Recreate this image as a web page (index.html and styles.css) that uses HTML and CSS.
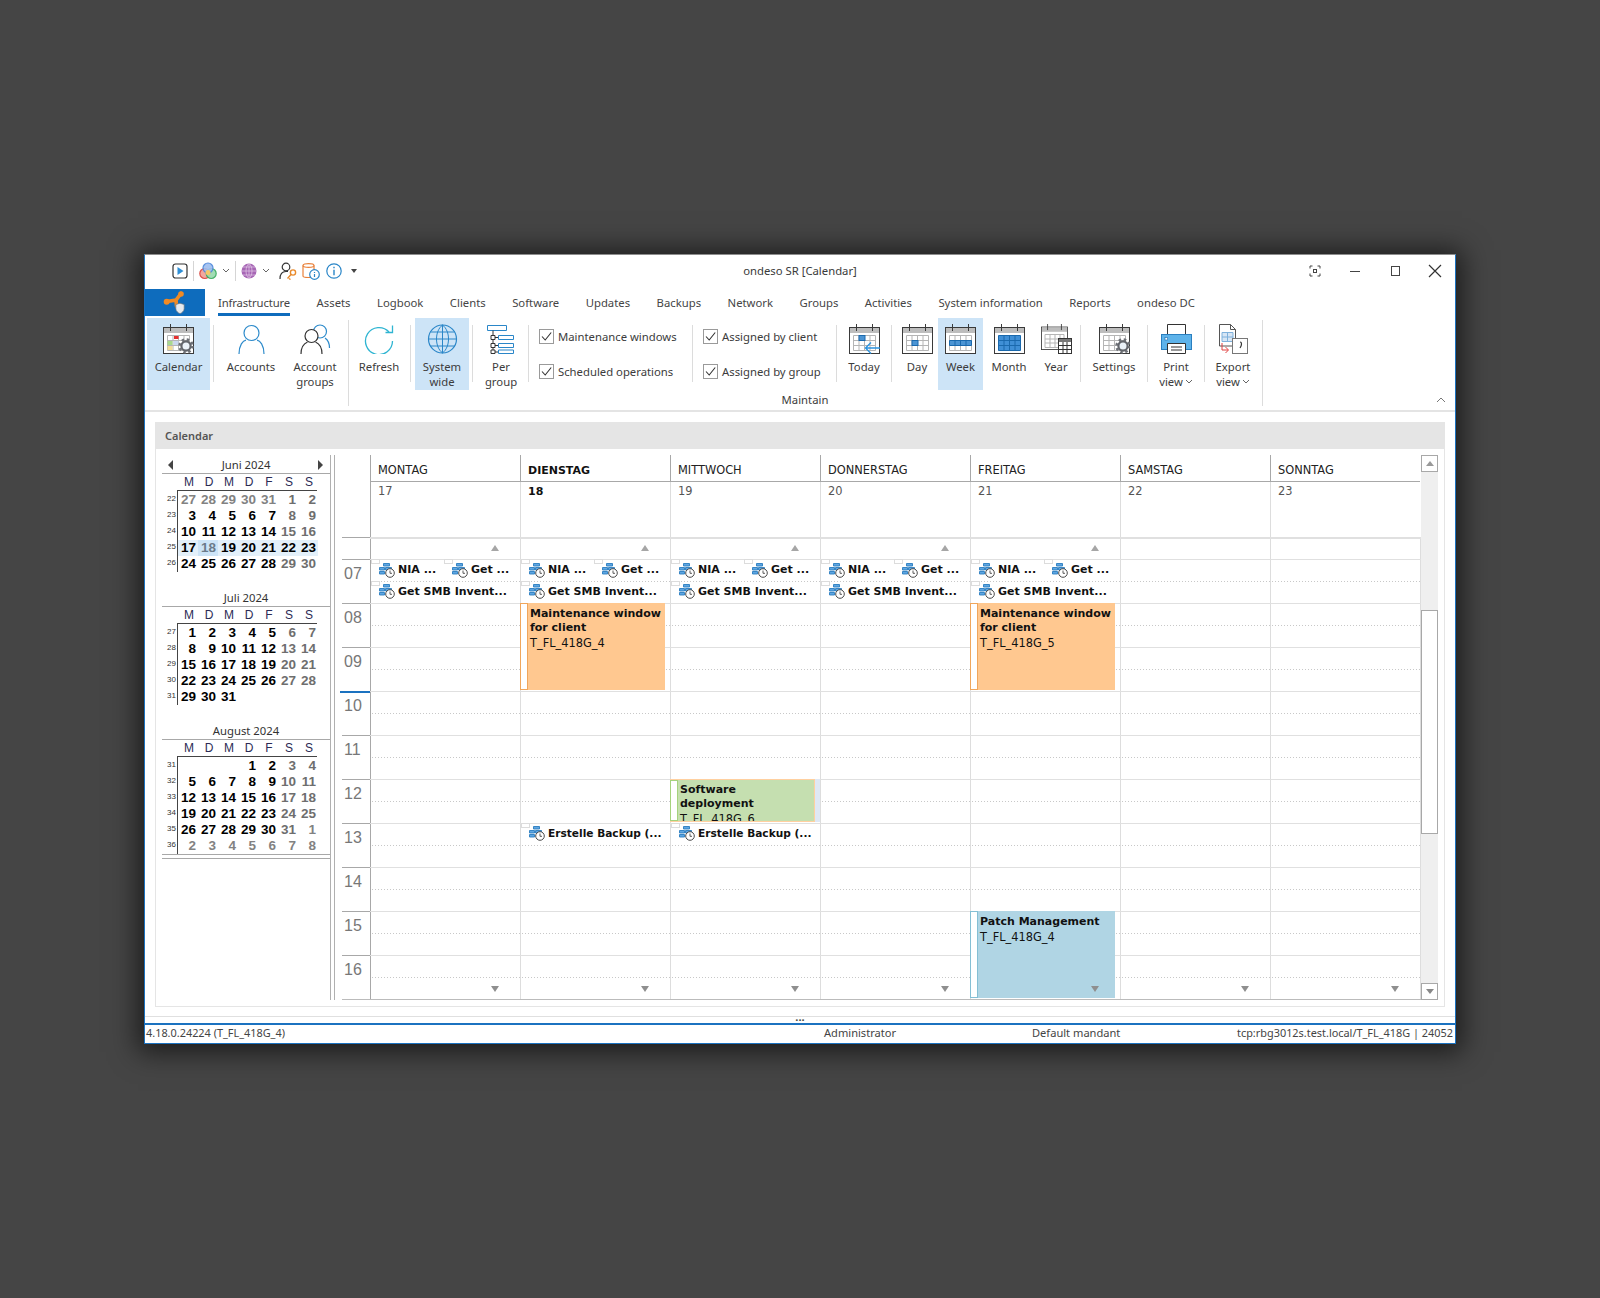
FILE: index.html
```html
<!DOCTYPE html>
<html lang="en">
<head>
<meta charset="utf-8">
<title>ondeso SR [Calendar]</title>
<link rel="stylesheet" href="styles.css">
</head>
<body>
<svg class="defs" width="0" height="0" aria-hidden="true">
  <symbol id="cal" viewBox="0 0 31 30">
    <rect x="0.5" y="3.5" width="30" height="26" fill="#fff" stroke="#3a3a3a"/>
    <rect x="1" y="4" width="29" height="5" fill="#bdbdbd"/>
    <path d="M7.5 0v7M23.5 0v7" stroke="#3a3a3a" fill="none"/>
  </symbol>
  <symbol id="grid" viewBox="0 0 31 30">
    <path d="M4.5 11.500h22v15h-22zM4.500 16.500h22M4.500 21.500h22M10 11.500v15M15.500 11.500v15M21 11.500v15" fill="none" stroke="#b5b5b5"/>
  </symbol>
  <symbol id="gear" viewBox="0 0 16 16">
    <circle cx="8" cy="8" r="6.500" fill="none" stroke="#6f7278" stroke-width="2.500" stroke-dasharray="2.500 2.600"/>
    <circle cx="8" cy="8" r="4.600" fill="#eaf1f8" stroke="#62656b" stroke-width="2.200"/>
  </symbol>
  <symbol id="job" viewBox="0 0 16 16">
    <path d="M4.500 1.500h6v2.500h-6zM0.500 5.500h5v2.500h-5zM6.500 5.500h6v2.500h-6zM0.500 9.500h5v2.500h-5z" fill="#5ea6e2" stroke="#2a7dc0" stroke-width=".9"/>
    <circle cx="11" cy="11" r="4.300" fill="#fff" stroke="#4a4a4a"/>
    <path d="M11 8.500V11.300H13" fill="none" stroke="#4a4a4a" stroke-width=".9"/>
  </symbol>
  <symbol id="chev" viewBox="0 0 8 5">
    <path d="M1 1l3 3 3-3" fill="none" stroke="#666"/>
  </symbol>
</svg>

<div class="window">
  <header class="titlebar">
    <div class="qa">
      <svg class="i16" viewBox="0 0 16 16"><rect x="1" y="1" width="14" height="14" rx="2.500" fill="#fff" stroke="#333" stroke-width="1.200"/><path d="M5.500 4v8l6-4z" fill="#2f8fd6"/></svg>
      <span class="qsep"></span>
      <svg class="i18" viewBox="0 0 18 18"><circle cx="5.800" cy="11.500" r="5" fill="#f2a79e" stroke="#dc4f48" stroke-width="1.200"/><circle cx="12.200" cy="11.500" r="5" fill="#9edcb2" stroke="#3fae62" stroke-width="1.200" opacity=".95"/><circle cx="9" cy="6" r="5" fill="#9dbdef" stroke="#4a85da" stroke-width="1.200" opacity=".9"/><circle cx="9" cy="10.500" r="2.500" fill="#f4c768"/></svg>
      <svg class="chev" viewBox="0 0 8 5"><use href="#chev"/></svg>
      <span class="qsep"></span>
      <svg class="i16" viewBox="0 0 16 16"><circle cx="8" cy="8" r="7.500" fill="#a766b5"/><path d="M0.500 8h15M8 .5v15M2 4h12M2 12h12M8 .5c-4 3-4 12 0 15M8 .5c4 3 4 12 0 15" fill="none" stroke="#e4cce8" stroke-width=".7"/></svg>
      <svg class="chev" viewBox="0 0 8 5"><use href="#chev"/></svg>
      <svg class="i18 ml4" viewBox="0 0 18 18"><circle cx="7" cy="5" r="3.800" fill="#fff" stroke="#333" stroke-width="1.200"/><path d="M1 17c0-5 2-7.500 6-7.500h2" fill="none" stroke="#333" stroke-width="1.200"/><circle cx="14" cy="10.500" r="2.600" fill="none" stroke="#e98a2b" stroke-width="1.400"/><path d="M12 12.500L8.500 16.500M10 16.500l1.500 1" fill="none" stroke="#e98a2b" stroke-width="1.400"/></svg>
      <svg class="i18" viewBox="0 0 18 18"><path d="M1 3.500C1 1 12 1 12 3.500V14c0 2-11 2-11 0z" fill="#fff" stroke="#e9813a" stroke-width="1.200"/><path d="M1 3.500c0 2.500 11 2.500 11 0" fill="none" stroke="#e9813a" stroke-width="1.200"/><circle cx="12.500" cy="12.500" r="4.800" fill="#fff" stroke="#2a86c8" stroke-width="1.200"/><path d="M12.500 10v.9M12.500 12v3" stroke="#2a86c8" stroke-width="1.200"/></svg>
      <svg class="i16 ml1" viewBox="0 0 16 16"><circle cx="8" cy="8" r="7.200" fill="#fff" stroke="#2a86c8" stroke-width="1.200"/><path d="M8 3.800v1.400M8 6.800v5.400" stroke="#2a86c8" stroke-width="1.400"/></svg>
      <span class="qarrow"></span>
    </div>
    <div class="title">ondeso SR [Calendar]</div>
    <div class="winctl">
      <span class="wbtn"><svg class="i12" viewBox="0 0 12 12"><path d="M1 3.500V1h2.500M8.500 1H11v2.500M11 8.500V11H8.500M3.500 11H1V8.500" fill="none" stroke="#444"/><rect x="4.500" y="4.500" width="3" height="3" fill="none" stroke="#444"/></svg></span>
      <span class="wbtn"><svg class="i12" viewBox="0 0 12 12"><path d="M1 6.500h10" stroke="#444"/></svg></span>
      <span class="wbtn"><svg class="i12" viewBox="0 0 12 12"><rect x="2.500" y="1.500" width="8" height="9" fill="none" stroke="#444"/></svg></span>
      <span class="wbtn"><svg class="i12b" viewBox="0 0 14 14"><path d="M1 1l12 12M13 1L1 13" stroke="#333" stroke-width="1.200"/></svg></span>
    </div>
  </header>

  <nav class="tabs">
    <div class="logo">
      <svg class="logo-i" viewBox="0 0 24 24"><path d="M4 10.500L13 9l5-6.500M13 9l0.500 6" fill="none" stroke="#f08a24" stroke-width="3.600" stroke-linecap="round"/><circle cx="3.700" cy="10.700" r="3" fill="#f08a24"/><circle cx="18" cy="3" r="2.800" fill="#f08a24"/><path d="M12.800 13.500l4.200-1.300 4.200 1.300v4.200c0 2.500-2.200 4-4.200 5-2-1-4.200-2.500-4.200-5z" fill="#e6eaee" stroke="#5d6e7c" stroke-width=".7"/></svg>
    </div>
    <span class="tab active">Infrastructure</span>
    <span class="tab">Assets</span>
    <span class="tab">Logbook</span>
    <span class="tab">Clients</span>
    <span class="tab">Software</span>
    <span class="tab">Updates</span>
    <span class="tab">Backups</span>
    <span class="tab">Network</span>
    <span class="tab">Groups</span>
    <span class="tab">Activities</span>
    <span class="tab">System information</span>
    <span class="tab">Reports</span>
    <span class="tab">ondeso DC</span>
  </nav>

  <section class="ribbon">
    <div class="btn w63 on">
      <svg class="ico" viewBox="0 0 31 30">
        <use href="#cal" width="31" height="30"/><use href="#grid" width="31" height="30"/>
        <rect x="11" y="12" width="4.500" height="3" fill="#e53030"/><rect x="4.500" y="17" width="5" height="4" fill="#a8d88e"/><rect x="10.500" y="17" width="5" height="4" fill="#c9d6ef"/><rect x="4.500" y="22" width="5" height="4" fill="#f3dc96"/>
        <use href="#gear" x="15" y="14" width="16" height="16"/>
      </svg>
      <span class="lbl">Calendar</span>
    </div>
    <span class="sep ml3"></span>
    <div class="btn w68 ml3">
      <svg class="ico" viewBox="0 0 31 30"><circle cx="15.500" cy="9" r="7.500" fill="none" stroke="#2e8bcb" stroke-width="1.200"/><path d="M3 30c0-9 4-13.500 7-13.800M28 30c0-9-4-13.500-7-13.800" fill="none" stroke="#2e8bcb" stroke-width="1.200"/></svg>
      <span class="lbl">Accounts</span>
    </div>
    <div class="btn w60">
      <svg class="ico" viewBox="0 0 31 30"><circle cx="20" cy="7.500" r="6.500" fill="#fff" stroke="#2e8bcb" stroke-width="1.200"/><path d="M25 14c3 2 4.500 5 4.500 10" fill="none" stroke="#2e8bcb" stroke-width="1.200"/><circle cx="11.500" cy="12" r="6.500" fill="#fff" stroke="#333" stroke-width="1.200"/><path d="M1 30c0-7 3-10.500 6.500-12M22 30c0-7-3-10.500-6.500-12" fill="none" stroke="#333" stroke-width="1.200"/></svg>
      <span class="lbl">Account<br>groups</span>
    </div>
    <span class="gsep ml3"></span>

    <div class="group">
      <div class="group-row">
        <div class="btn w60">
          <svg class="ico" viewBox="0 0 31 30"><path d="M25 8a13.500 13.500 0 1 0 3.500 9" fill="none" stroke="#2fb5d2" stroke-width="1.300"/><path d="M28.500 1.500V8.500H21.500" fill="none" stroke="#2fb5d2" stroke-width="1.300"/></svg>
          <span class="lbl">Refresh</span>
        </div>
        <span class="sep ml1"></span>
        <div class="btn w54 ml4 on">
          <svg class="ico" viewBox="0 0 31 30"><circle cx="15.500" cy="15" r="14" fill="none" stroke="#2a86c8" stroke-width="1.200"/><path d="M1.500 15h28M15.500 1v28M3.500 8h24M3.500 22h24M15.500 1c-8 6-8 22 0 28M15.500 1c8 6 8 22 0 28" fill="none" stroke="#2a86c8"/></svg>
          <span class="lbl">System<br>wide</span>
        </div>
        <span class="sep ml3"></span>
        <div class="btn w55 pl1">
          <svg class="ico" viewBox="0 0 31 30"><path d="M1.500 1.500h19v5h-19zM12.500 11.500h15v4h-15zM12.500 19.500h15v4h-15zM12.500 26h15v3.500h-15z" fill="#fff" stroke="#2a86c8"/><path d="M7 6.500V28M7 13.500h5M7 21.500h5M7 28h5" fill="none" stroke="#333"/><path d="M5 11.500h4v4H5zM5 19.500h4v4H5zM5 26h4v3.500H5z" fill="#fff" stroke="#333"/></svg>
          <span class="lbl">Per<br>group</span>
        </div>
        <span class="sep"></span>
        <div class="checks ml10 w153">
          <label class="chk"><span class="box"><svg class="tick" viewBox="0 0 11 11"><path d="M1 5.500l3.200 3.500 6-7.500" fill="none" stroke="#333" stroke-width="1.100"/></svg></span><span>Maintenance windows</span></label>
          <label class="chk"><span class="box"><svg class="tick" viewBox="0 0 11 11"><path d="M1 5.500l3.200 3.500 6-7.500" fill="none" stroke="#333" stroke-width="1.100"/></svg></span><span>Scheduled operations</span></label>
        </div>
        <span class="sep"></span>
        <div class="checks ml10 w133">
          <label class="chk"><span class="box"><svg class="tick" viewBox="0 0 11 11"><path d="M1 5.500l3.200 3.500 6-7.500" fill="none" stroke="#333" stroke-width="1.100"/></svg></span><span>Assigned by client</span></label>
          <label class="chk"><span class="box"><svg class="tick" viewBox="0 0 11 11"><path d="M1 5.500l3.200 3.500 6-7.500" fill="none" stroke="#333" stroke-width="1.100"/></svg></span><span>Assigned by group</span></label>
        </div>
        <span class="sep"></span>
        <div class="btn w54">
          <svg class="ico" viewBox="0 0 31 30"><use href="#cal" width="31" height="30"/><use href="#grid" width="31" height="30"/><rect x="10" y="11.500" width="6" height="5" fill="#4b94d3" stroke="#1a69ad"/><path d="M31 24H17M22 18.500L16.500 24l5.500 5.500" fill="none" stroke="#2a93e0" stroke-width="1.300"/></svg>
          <span class="lbl">Today</span>
        </div>
        <span class="sep"></span>
        <div class="btn w46 pl4">
          <svg class="ico" viewBox="0 0 31 30"><use href="#cal" width="31" height="30"/><use href="#grid" width="31" height="30"/><rect x="10" y="16.500" width="6" height="5" fill="#4b94d3" stroke="#1a69ad"/></svg>
          <span class="lbl">Day</span>
        </div>
        <div class="btn w45 on">
          <svg class="ico" viewBox="0 0 31 30"><use href="#cal" width="31" height="30"/><use href="#grid" width="31" height="30"/><path d="M4.500 16.500h22v5h-22zM10 16.500v5M15.500 16.500v5M21 16.500v5" fill="#4b94d3" stroke="#1a69ad"/></svg>
          <span class="lbl">Week</span>
        </div>
        <div class="btn w52">
          <svg class="ico" viewBox="0 0 31 30"><use href="#cal" width="31" height="30"/><path d="M4.500 11.500h22v15h-22z" fill="#3f8fd6" stroke="#1a69ad"/><path d="M4.500 16.500h22M4.500 21.500h22M10 11.500v15M15.500 11.500v15M21 11.500v15" fill="none" stroke="#1a69ad"/></svg>
          <span class="lbl">Month</span>
        </div>
        <div class="btn w42">
          <svg class="ico" viewBox="0 0 31 30"><use href="#cal" width="27" height="26"/><path d="M4 10.500h19v13H4zM4 15h19M4 19h19M9 10.500v13M14 10.500v13M19 10.500v13" fill="none" stroke="#b5b5b5"/><rect x="17.500" y="14.500" width="13" height="15" fill="#fff" stroke="#333"/><rect x="18" y="15" width="12" height="3" fill="#777"/><path d="M17.500 21.500h13M17.500 25.500h13M22 18v11.500M26 18v11.500" fill="none" stroke="#333"/></svg>
          <span class="lbl">Year</span>
        </div>
        <span class="sep ml3"></span>
        <div class="btn w66">
          <svg class="ico" viewBox="0 0 31 30"><use href="#cal" width="31" height="30"/><use href="#grid" width="31" height="30"/><use href="#gear" x="16" y="14" width="16" height="16"/></svg>
          <span class="lbl">Settings</span>
        </div>
        <span class="sep"></span>
        <div class="btn w56">
          <svg class="ico" viewBox="0 0 31 30"><path d="M6.500 .5h18v11h-18z" fill="#fff" stroke="#333"/><rect x=".5" y="10.500" width="30" height="15" fill="#5eb3ea" stroke="#2a7fc0"/><rect x="4" y="13.500" width="2.500" height="2.500" fill="#fff" stroke="#1a69ad" stroke-width=".6"/><path d="M6.500 19.500h18v10h-18z" fill="#fff" stroke="#333"/><path d="M10 23h11M10 26h11" stroke="#333"/></svg>
          <span class="lbl">Print<br>view<svg class="mchev" viewBox="0 0 8 5"><use href="#chev"/></svg></span>
        </div>
        <span class="sep"></span>
        <div class="btn w56">
          <svg class="ico" viewBox="0 0 31 30"><path d="M1.500 .5h11l5 5V22h-16z" fill="#fff" stroke="#555"/><path d="M12.500 .5v5h5" fill="none" stroke="#555"/><path d="M4 8.500h11v9H4zM4 13h11M9.500 8.500v9" fill="#d7e6f5" stroke="#7fb1dc"/><rect x="14.500" y="14.500" width="15" height="15" fill="#fff" stroke="#777"/><path d="M22 18c2 0 2 3 0 6" fill="none" stroke="#333" stroke-width="1.200"/><path d="M4 19v7h6M7.500 23l3 3-3 3" fill="none" stroke="#e04040"/></svg>
          <span class="lbl">Export<br>view<svg class="mchev" viewBox="0 0 8 5"><use href="#chev"/></svg></span>
        </div>
      </div>
      <div class="caption">Maintain</div>
    </div>
    <span class="gsep ml1"></span>
    <svg class="collapse" viewBox="0 0 10 6"><path d="M1 5l4-4 4 4" fill="none" stroke="#777"/></svg>
  </section>

  <main class="content">
    <div class="panel">
      <div class="panel-head">Calendar</div>
      <div class="panel-body">
        <aside class="side">
          <div class="month">
            <div class="m-title"><span class="nav-l"></span><span>Juni 2024</span><span class="nav-r"></span></div>
            <div class="wd"><span>M</span><span>D</span><span>M</span><span>D</span><span>F</span><span>S</span><span>S</span></div>
            <div class="days">
              <span class="wk">22</span><span class="g">27</span><span class="g">28</span><span class="g">29</span><span class="g">30</span><span class="g">31</span><span class="w">1</span><span class="w">2</span>
              <span class="wk">23</span><span>3</span><span>4</span><span>5</span><span>6</span><span>7</span><span class="w">8</span><span class="w">9</span>
              <span class="wk">24</span><span>10</span><span>11</span><span>12</span><span>13</span><span>14</span><span class="w">15</span><span class="w">16</span>
              <span class="wk">25</span><span class="s">17</span><span class="c">18</span><span class="s">19</span><span class="s">20</span><span class="s">21</span><span class="s">22</span><span class="s">23</span>
              <span class="wk">26</span><span>24</span><span>25</span><span>26</span><span>27</span><span>28</span><span class="w">29</span><span class="w">30</span>
            </div>
          </div>
          <div class="month">
            <div class="m-title"><span>Juli 2024</span></div>
            <div class="wd"><span>M</span><span>D</span><span>M</span><span>D</span><span>F</span><span>S</span><span>S</span></div>
            <div class="days">
              <span class="wk">27</span><span>1</span><span>2</span><span>3</span><span>4</span><span>5</span><span class="w">6</span><span class="w">7</span>
              <span class="wk">28</span><span>8</span><span>9</span><span>10</span><span>11</span><span>12</span><span class="w">13</span><span class="w">14</span>
              <span class="wk">29</span><span>15</span><span>16</span><span>17</span><span>18</span><span>19</span><span class="w">20</span><span class="w">21</span>
              <span class="wk">30</span><span>22</span><span>23</span><span>24</span><span>25</span><span>26</span><span class="w">27</span><span class="w">28</span>
              <span class="wk">31</span><span>29</span><span>30</span><span>31</span>
            </div>
          </div>
          <div class="month last-month">
            <div class="m-title"><span>August 2024</span></div>
            <div class="wd"><span>M</span><span>D</span><span>M</span><span>D</span><span>F</span><span>S</span><span>S</span></div>
            <div class="days">
              <span class="wk">31</span><span></span><span></span><span></span><span>1</span><span>2</span><span class="w">3</span><span class="w">4</span>
              <span class="wk">32</span><span>5</span><span>6</span><span>7</span><span>8</span><span>9</span><span class="w">10</span><span class="w">11</span>
              <span class="wk">33</span><span>12</span><span>13</span><span>14</span><span>15</span><span>16</span><span class="w">17</span><span class="w">18</span>
              <span class="wk">34</span><span>19</span><span>20</span><span>21</span><span>22</span><span>23</span><span class="w">24</span><span class="w">25</span>
              <span class="wk">35</span><span>26</span><span>27</span><span>28</span><span>29</span><span>30</span><span class="w">31</span><span class="g">1</span>
              <span class="wk">36</span><span class="g">2</span><span class="g">3</span><span class="g">4</span><span class="g">5</span><span class="g">6</span><span class="g">7</span><span class="g">8</span>
            </div>
          </div>
          <div class="side-rest"></div>
        </aside>

        <section class="cal">
          <div class="cal-main">
            <div class="cal-head">
              <div class="corner"></div>
              <div class="dh"><div class="dn">MONTAG</div><div class="dd">17</div></div>
              <div class="dh today"><div class="dn">DIENSTAG</div><div class="dd">18</div></div>
              <div class="dh"><div class="dn">MITTWOCH</div><div class="dd">19</div></div>
              <div class="dh"><div class="dn">DONNERSTAG</div><div class="dd">20</div></div>
              <div class="dh"><div class="dn">FREITAG</div><div class="dd">21</div></div>
              <div class="dh"><div class="dn">SAMSTAG</div><div class="dd">22</div></div>
              <div class="dh"><div class="dn">SONNTAG</div><div class="dd">23</div></div>
            </div>
            <div class="cal-body">
              <div class="hr first"><span class="t"></span><span class="cells"></span></div>
              <div class="hr"><span class="t">07</span><span class="cells"></span></div>
              <div class="hr"><span class="t">08</span><span class="cells"></span></div>
              <div class="hr"><span class="t">09</span><span class="cells"></span></div>
              <div class="hr now"><span class="t">10</span><span class="cells"></span></div>
              <div class="hr"><span class="t">11</span><span class="cells"></span></div>
              <div class="hr"><span class="t">12</span><span class="cells"></span></div>
              <div class="hr"><span class="t">13</span><span class="cells"></span></div>
              <div class="hr"><span class="t">14</span><span class="cells"></span></div>
              <div class="hr"><span class="t">15</span><span class="cells"></span></div>
              <div class="hr last"><span class="t">16</span><span class="cells"></span></div>

              <div class="overlay">
                <div class="col">
                  <span class="up"></span><span class="down"></span>
                  <div class="chip c1"><svg class="job"><use href="#job"/></svg>NIA ...</div>
                  <div class="chip c2"><svg class="job"><use href="#job"/></svg>Get ...</div>
                  <div class="chip c3"><svg class="job"><use href="#job"/></svg>Get SMB Invent...</div>
                </div>
                <div class="col">
                  <span class="up"></span><span class="down"></span>
                  <div class="chip c1"><svg class="job"><use href="#job"/></svg>NIA ...</div>
                  <div class="chip c2"><svg class="job"><use href="#job"/></svg>Get ...</div>
                  <div class="chip c3"><svg class="job"><use href="#job"/></svg>Get SMB Invent...</div>
                  <div class="ev maint"><b>Maintenance window for client</b><span>T_FL_418G_4</span></div>
                  <div class="chip c4"><svg class="job"><use href="#job"/></svg>Erstelle Backup (...</div>
                </div>
                <div class="col">
                  <span class="up"></span><span class="down"></span>
                  <div class="chip c1"><svg class="job"><use href="#job"/></svg>NIA ...</div>
                  <div class="chip c2"><svg class="job"><use href="#job"/></svg>Get ...</div>
                  <div class="chip c3"><svg class="job"><use href="#job"/></svg>Get SMB Invent...</div>
                  <div class="ev deploy"><b>Software deployment</b><span>T_FL_418G_6</span></div>
                  <div class="chip c4"><svg class="job"><use href="#job"/></svg>Erstelle Backup (...</div>
                </div>
                <div class="col">
                  <span class="up"></span><span class="down"></span>
                  <div class="chip c1"><svg class="job"><use href="#job"/></svg>NIA ...</div>
                  <div class="chip c2"><svg class="job"><use href="#job"/></svg>Get ...</div>
                  <div class="chip c3"><svg class="job"><use href="#job"/></svg>Get SMB Invent...</div>
                </div>
                <div class="col">
                  <span class="up"></span>
                  <div class="chip c1"><svg class="job"><use href="#job"/></svg>NIA ...</div>
                  <div class="chip c2"><svg class="job"><use href="#job"/></svg>Get ...</div>
                  <div class="chip c3"><svg class="job"><use href="#job"/></svg>Get SMB Invent...</div>
                  <div class="ev maint"><b>Maintenance window for client</b><span>T_FL_418G_5</span></div>
                  <div class="ev patch"><b>Patch Management</b><span>T_FL_418G_4</span></div>
                  <span class="down"></span>
                </div>
                <div class="col"><span class="down"></span></div>
                <div class="col"><span class="down"></span></div>
              </div>
            </div>
          </div>
          <div class="scroll">
            <span class="sb-btn"><i class="tri-up"></i></span>
            <span class="sb-thumb"></span>
            <span class="sb-btn end"><i class="tri-down"></i></span>
          </div>
        </section>
      </div>
    </div>
  </main>

  <div class="splitter">...</div>
  <footer class="status">
    <span class="st1">4.18.0.24224 (T_FL_418G_4)</span>
    <span class="st2">Administrator</span>
    <span class="st3">Default mandant</span>
    <span class="st4">tcp:rbg3012s.test.local/T_FL_418G | 24052</span>
  </footer>
</div>
</body>
</html>
```
FILE: styles.css
```css
* { box-sizing: border-box; }
html, body { margin: 0; height: 100%; }
body {
  background: #454545;
  font-family: "Noto Sans", "Liberation Sans", sans-serif;
  font-size: 11.3px;
  color: #3c3c3c;
  overflow: hidden;
}
.defs { position: absolute; }

.window {
  width: 1312px;
  height: 790px;
  margin: 254px 0 0 144px;
  background: #fff;
  border: 1px solid #1b72c0;
  border-top-color: #8d8d8d;
  display: flex;
  flex-direction: column;
  box-shadow: 0 2px 26px 6px rgba(0, 0, 0, .62);
}

/* title bar */
.titlebar {
  height: 34px;
  flex: none;
  display: grid;
  grid-template-columns: 1fr auto 1fr;
  align-items: center;
  padding-bottom: 3px;
}
.qa { display: flex; align-items: center; gap: 5px; padding-left: 27px; }
.qsep { width: 1px; height: 20px; background: #d5d5d5; }
.i16 { width: 16px; height: 16px; }
.i18 { width: 18px; height: 18px; }
.i12 { width: 12px; height: 12px; }
.i12b { width: 14px; height: 14px; }
.chev { width: 8px; height: 5px; }
.qarrow { width: 0; height: 0; margin-left: 4px; border: 3.5px solid transparent; border-top: 4px solid #444; border-bottom: 0; }
.title { font-size: 11.3px; color: #3a3a3a; }
.winctl { display: flex; justify-content: flex-end; }
.wbtn { width: 40px; height: 30px; display: flex; align-items: center; justify-content: center; }

/* tabs */
.tabs { height: 27px; flex: none; display: flex; align-items: stretch; gap: 26.5px; font-size: 11.3px; }
.logo { width: 60px; background: #0e6cbd; display: flex; align-items: center; justify-content: center; margin-right: -13.5px; }
.logo-i { width: 24px; height: 24px; }
.tab { display: flex; align-items: center; height: 27px; color: #454545; }
.tab.active { border-bottom: 3px solid #0e6cbd; padding-top: 3px; letter-spacing: -.13px; }

/* ribbon */
.ribbon {
  height: 96px;
  flex: none;
  display: flex;
  align-items: flex-start;
  padding: 2px 0 0 2px;
  border-bottom: 2px solid #e4e4e4;
}
.btn {
  height: 72px;
  flex: none;
  display: flex;
  flex-direction: column;
  align-items: center;
  padding-top: 6px;
  text-align: center;
}
.btn.on { background: #cde4f7; }
.ico { width: 31px; height: 30px; flex: none; }
.lbl { margin-top: 5px; line-height: 15px; white-space: nowrap; }
.mchev { width: 8px; height: 5px; margin-left: 2px; vertical-align: 2px; }
.sep { width: 1px; height: 57px; margin-top: 7px; background: #dcdcdc; flex: none; }
.gsep { width: 1px; height: 86px; margin-top: 2px; background: #dcdcdc; flex: none; }
.w42 { width: 42px; } .w45 { width: 45px; } .w46 { width: 46px; } .w52 { width: 52px; }
.w54 { width: 54px; } .w55 { width: 55px; } .w56 { width: 56px; } .w60 { width: 60px; }
.w63 { width: 63px; } .w66 { width: 66px; } .w68 { width: 68px; }
.w153 { width: 153px; } .w133 { width: 133px; }
.ml1 { margin-left: 1px; } .ml3 { margin-left: 3px; } .ml4 { margin-left: 4px; } .ml10 { margin-left: 10px; }
.pl1 { padding-left: 1px; } .pl4 { padding-left: 4px; }
.group { display: flex; flex-direction: column; flex: none; }
.group-row { display: flex; align-items: flex-start; }
.caption { text-align: center; line-height: 15px; margin-top: 2px; }
.checks { flex: none; display: flex; flex-direction: column; gap: 20px; padding-top: 11px; }
.chk { display: flex; align-items: center; gap: 4px; height: 15px; white-space: nowrap; }
.box { width: 15px; height: 15px; border: 1px solid #9a9a9a; display: flex; align-items: center; justify-content: center; flex: none; }
.tick { width: 11px; height: 11px; }
.collapse { width: 10px; height: 6px; margin: 79px 9px 0 auto; }

/* content */
.content { height: 605px; flex: none; padding: 10px; border-bottom: 1px solid #e0e0e0; }
.panel { height: 585px; border: 1px solid #e5e5e5; display: flex; flex-direction: column; }
.panel-head { height: 26px; flex: none; background: #e5e5e5; padding-left: 9px; font-weight: 600; font-size: 11px; color: #555; line-height: 26px; }
.panel-body { flex: 1; display: flex; padding: 6px 6px 6px 6px; min-height: 0; }

/* mini calendars */
.side { width: 169px; flex: none; border-right: 1px solid #b0b0b0; display: flex; flex-direction: column; font-family: "Liberation Sans", sans-serif; }
.month { height: 133px; flex: none; }
.last-month { height: 134px; border-bottom: 1px solid #a8a8a8; }
.m-title { height: 19px; border-bottom: 1px solid #a8a8a8; display: flex; align-items: center; justify-content: center; position: relative; font-family: "Noto Sans", sans-serif; font-size: 11.3px; color: #333; }
.nav-l, .nav-r { position: absolute; top: 5px; width: 0; height: 0; border: 5px solid transparent; }
.nav-l { left: 6px; border-left: 0; border-right: 5px solid #444; }
.nav-r { right: 7px; border-right: 0; border-left: 5px solid #444; }
.wd { margin-left: 15px; height: 17px; width: 140px; border-bottom: 1px solid #444; display: grid; grid-template-columns: repeat(7, 20px); font-size: 12px; color: #2b2b55; line-height: 17px; text-align: center; padding-left: 2px; }
.days { display: grid; grid-template-columns: 16px repeat(7, 20px); grid-auto-rows: 16px; padding-top: 1px; }
.days span { font-weight: 700; font-size: 13.5px; line-height: 16px; text-align: right; padding-right: 2px; color: #000; }
.days .wk { font-weight: 400; font-size: 8px; color: #333; border-right: 1px solid #444; padding: 1px 1px 0 0; line-height: 13px; margin-top: -1px; height: 17px; }
.days .g { color: #828282; }
.days .w { color: #6e6e6e; }
.days .s { background: #e3f0fa; }
.days .c { background: #cde4f7; color: #6b7b8a; }
.side-rest { flex: 1; margin-top: 3px; border-top: 1px solid #a8a8a8; }

/* week view */
.cal { flex: 1; display: flex; margin-left: 3px; border-left: 1px solid #b0b0b0; font-family: "DejaVu Sans", sans-serif; min-width: 0; }
.cal-main { width: 1086px; flex: none; display: flex; flex-direction: column; }
.cal-head { height: 82px; flex: none; display: flex; }
.corner { width: 35px; flex: none; }
.dh { width: 150px; flex: none; font-size: 11.4px; color: #222; }
.dn { height: 27px; border-left: 1px solid #a8a8a8; border-bottom: 1px solid #a8a8a8; padding: 8px 0 0 7px; line-height: 15px; }
.dd { height: 55px; border-left: 1px solid #ddd; padding: 2px 0 0 7px; line-height: 15px; color: #555; }
.corner + .dh .dd { border-left-color: #a8a8a8; }
.today { font-size: 11px; }
.today .dn, .today .dd { font-weight: 700; color: #111; }

.cal-body { position: relative; flex: 1; display: flex; flex-direction: column; min-height: 0; }
.hr { height: 44px; flex: none; display: flex; }
.hr.first { height: 22px; }
.hr.first .cells { border-top: 2px solid #e0e0e0; }
.hr.first .cells::after { display: none; }
.hr.last { height: 45px; }
.hr.last .t, .hr.last .cells { border-bottom: 1px solid #bbb; }
.hr .t {
  width: 28px;
  flex: none;
  margin-left: 7px;
  border-top: 1px solid #a8a8a8;
  font-family: "Liberation Sans", sans-serif;
  font-size: 16px;
  line-height: 27px;
  color: #777;
  padding-left: 2px;
}
.hr.now .t { width: 30px; margin-left: 5px; border-top: 2px solid #1b72c0; padding-left: 4px; line-height: 26px; }
.hr .cells {
  width: 1051px;
  flex: none;
  border-top: 1px solid #e0e0e0;
  position: relative;
  background: linear-gradient(90deg, #ddd 1px, transparent 1px) 0 0 / 150px 100%;
  box-shadow: inset 1px 0 #a8a8a8;
}
.hr .cells::after {
  content: "";
  position: absolute;
  left: 2px;
  right: 0;
  top: 21px;
  height: 1px;
  background: repeating-linear-gradient(90deg, #c8c8c8 0, #c8c8c8 1px, transparent 1px, transparent 3px);
}
.overlay { position: absolute; left: 35px; top: 0; width: 1050px; height: 100%; display: grid; grid-template-columns: repeat(7, 150px); }
.col { position: relative; }
.up, .down { position: absolute; left: 121px; width: 0; height: 0; border: 4px solid transparent; }
.up { top: 8px; border-top: 0; border-bottom: 6px solid #a6a6a6; }
.down { top: 449px; border-bottom: 0; border-top: 6px solid #8f8f8f; }

.chip {
  position: absolute;
  display: flex;
  align-items: center;
  height: 18px;
  font-weight: 700;
  font-size: 11px;
  color: #111;
  white-space: nowrap;
  padding-left: 9px;
}
.chip::before { content: ""; position: absolute; left: 1px; top: -1px; width: 7px; height: 3px; border: 1px solid #dcdcdc; background: #fff; }
.c1 { left: 0; top: 23px; padding-top: 1px; }
.c2 { left: 73px; top: 23px; padding-top: 1px; }
.c3 { left: 0; top: 45px; }
.c4 { left: 0; top: 287px; z-index: 1; font-size: 10.6px; }
.job { width: 16px; height: 16px; margin-right: 3px; flex: none; }

.ev { position: absolute; left: 0; width: 145px; overflow: hidden; font-size: 11px; line-height: 14px; color: #111; padding: 4px 2px 0 10px; }
.ev::before { content: ""; position: absolute; left: 0; top: 0; bottom: 0; width: 6px; background: #fff; border: 1px solid #888; }
.ev b { display: block; font-weight: 700; }
.ev span { display: block; margin-top: 1px; font-weight: 400; font-size: 11.4px; }
.maint { top: 66px; height: 87px; background: #ffc890; }
.maint::before { border-color: #f0a65c; }
.patch { top: 374px; height: 87px; background: #b0d5e4; }
.patch::before { border-color: #85bfd4; }
.deploy { top: 242px; height: 43px; background: #c5dfb0; border: 1px solid #ffd0a0; border-left: 0; box-shadow: 5px 0 0 #dfe8f5; padding-top: 3px; }
.deploy::before { border-color: #a5d27d; }

/* scrollbar */
.scroll { width: 17px; flex: none; background: #efefef; display: flex; flex-direction: column; }
.sb-btn { height: 17px; flex: none; background: #fff; border: 1px solid #a8a8a8; display: flex; align-items: center; justify-content: center; }
.sb-btn.end { margin-top: auto; }
.tri-up { width: 0; height: 0; border: 4px solid transparent; border-top: 0; border-bottom: 5px solid #999; }
.tri-down { width: 0; height: 0; border: 4px solid transparent; border-bottom: 0; border-top: 5px solid #888; }
.sb-thumb { height: 224px; flex: none; margin-top: 138px; background: #fff; border: 1px solid #a8a8a8; }

/* footer */
.splitter { height: 6px; flex: none; text-align: center; font-size: 11px; font-weight: 700; line-height: 0; color: #444; }
.status {
  flex: 1;
  border-top: 2px solid #1b72c0;
  display: flex;
  align-items: flex-start;
  font-size: 11.1px;
  line-height: 16px;
  padding: 0 2px 0 1px;
  color: #444;
  white-space: nowrap;
}
.st1 { width: 678px; flex: none; font-size: 10.9px; }
.st2 { width: 208px; flex: none; }
.st3 { flex: none; }
.st4 { margin-left: auto; font-size: 10.9px; }
```
